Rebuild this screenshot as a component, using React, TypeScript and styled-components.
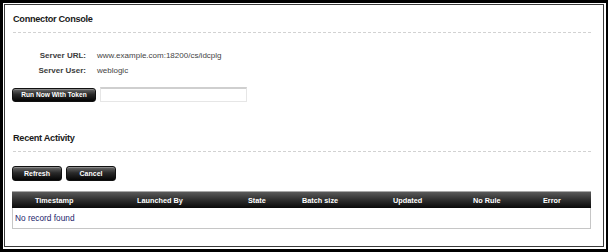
import React from "react";
import styled, { createGlobalStyle } from "styled-components";

const GlobalStyle = createGlobalStyle`
  html, body {
    margin: 0;
    padding: 0;
    background: #fff;
  }

  body {
    font-family: "Liberation Sans", Arial, sans-serif;
  }
`;

const columns = ["Timestamp", "Launched By", "State", "Batch size", "Updated", "No Rule", "Error"];

const App: React.FC = () => {
  return (
    <>
      <GlobalStyle />
      <Frame>
        <Window>
          <SectionTitle>Connector Console</SectionTitle>

          <InfoList>
            <Label>Server URL:</Label>
            <Value>www.example.com:18200/cs/idcplg</Value>
            <Label>Server User:</Label>
            <Value>weblogic</Value>
          </InfoList>

          <TokenRow>
            <DarkButton>Run Now With Token</DarkButton>
            <TokenInput type="text" />
          </TokenRow>

          <SectionTitle spaced>Recent Activity</SectionTitle>

          <ButtonRow>
            <DarkButton wide>Refresh</DarkButton>
            <DarkButton wide>Cancel</DarkButton>
          </ButtonRow>

          <Table>
            <HeaderRow>
              {columns.map((col) => (
                <HeaderCell key={col}>{col}</HeaderCell>
              ))}
            </HeaderRow>
            <EmptyRow>No record found</EmptyRow>
          </Table>
        </Window>
      </Frame>
    </>
  );
};

const Frame = styled.div`
  box-sizing: border-box;
  width: 608px;
  height: 252px;

  padding: 1px 2px 2px 1px;

  border: 3px solid #000;
  border-right-width: 2px;
  background: #fff;
`;

const Window = styled.div`
  display: flex;
  flex-direction: column;

  box-sizing: border-box;
  height: 100%;

  padding: 0 12px 0 8px;

  border: 1px solid #3a3a3a;
`;

const SectionTitle = styled.h2<{ spaced?: boolean }>`
  margin: ${(props) => (props.spaced ? "30px" : "8px")} 0 0;
  padding-bottom: 7px;

  font-size: 9.2px;
  line-height: 12px;
  font-weight: 700;
  letter-spacing: -0.3px;
  color: #1a1a1a;

  border-bottom: 1px dashed #d2d2d2;
`;

const InfoList = styled.div`
  display: grid;
  grid-template-columns: 73px 1fr;
  column-gap: 11px;

  margin-top: 15px;

  font-size: 8px;
  line-height: 15px;
`;

const Label = styled.span`
  text-align: right;
  font-weight: 700;
  color: #3c3c3c;
`;

const Value = styled.span`
  color: #444;
`;

const TokenRow = styled.div`
  display: flex;
  align-items: center;
  gap: 4px;

  height: 15px;
  margin-top: 9px;
  margin-left: -1px;
`;

const DarkButton = styled.button<{ wide?: boolean }>`
  box-sizing: border-box;
  width: ${(props) => (props.wide ? "50px" : "84px")};
  height: ${(props) => (props.wide ? "15px" : "14px")};
  padding: 0;

  font-family: "Liberation Sans", Arial, sans-serif;
  font-size: ${(props) => (props.wide ? "7px" : "6.6px")};
  font-weight: 700;
  color: #fff;

  border: 1px solid #111;
  border-radius: 3px;
  background: linear-gradient(to bottom, #6a6a6a 0%, #2a2a2a 45%, #050505 100%);
  box-shadow: inset 0 1px 0 rgba(255, 255, 255, 0.25);
`;

const TokenInput = styled.input`
  box-sizing: border-box;
  width: 147px;
  height: 15px;
  padding: 0 3px;

  border: 1px solid #e6e6e6;
  border-top: 2px solid #cfcfcf;
  outline: none;
`;

const ButtonRow = styled.div`
  display: flex;
  gap: 4px;

  margin-top: 14px;
  margin-left: -1px;
`;

const Table = styled.div`
  display: flex;
  flex-direction: column;

  margin-top: 10px;
  margin-left: -1px;

  border: 1px solid #c6c6c6;
  border-top: none;
`;

const HeaderRow = styled.div`
  display: grid;
  grid-template-columns: 125px 111px 54px 91px 80px 70px 1fr;
  align-items: center;

  height: 16px;
  margin: 0 -1px;

  border-top: 1px solid #a9a9a9;
  background: linear-gradient(to bottom, #5a5a5a 0%, #2e2e2e 50%, #0a0a0a 100%);
`;

const HeaderCell = styled.span`
  font-size: 7.3px;
  font-weight: 700;
  color: #fff;

  &:first-child {
    padding-left: 23px;
  }
`;

const EmptyRow = styled.div`
  height: 20px;
  padding-left: 2px;

  font-size: 8.3px;
  line-height: 20px;
  color: #23236b;
`;

export default App;
